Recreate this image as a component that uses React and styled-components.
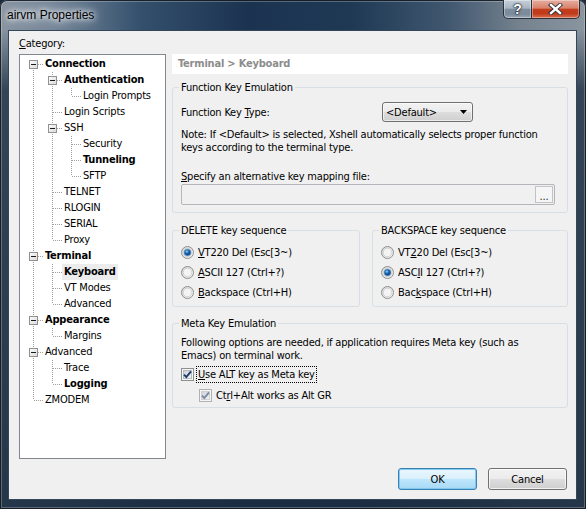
import React from 'react';
import styled, { createGlobalStyle } from 'styled-components';

const uiFont = `"DejaVu Sans Condensed", "DejaVu Sans", sans-serif`;

const GlobalStyle = createGlobalStyle`
  html, body {
    margin: 0;
    padding: 0;
    background: #1b2a3b;
  }
  body {
    width: 586px;
    height: 509px;
    overflow: hidden;
  }
`;

const tree = [
  {
    label: 'Connection',
    bold: true,
    children: [
      { label: 'Authentication', bold: true, children: [{ label: 'Login Prompts' }] },
      { label: 'Login Scripts' },
      {
        label: 'SSH',
        children: [{ label: 'Security' }, { label: 'Tunneling', bold: true }, { label: 'SFTP' }]
      },
      { label: 'TELNET' },
      { label: 'RLOGIN' },
      { label: 'SERIAL' },
      { label: 'Proxy' }
    ]
  },
  {
    label: 'Terminal',
    bold: true,
    children: [
      { label: 'Keyboard', bold: true, selected: true },
      { label: 'VT Modes' },
      { label: 'Advanced' }
    ]
  },
  { label: 'Appearance', bold: true, children: [{ label: 'Margins' }] },
  { label: 'Advanced', children: [{ label: 'Trace' }, { label: 'Logging', bold: true }] },
  { label: 'ZMODEM' }
];

function flatten(nodes, depth = 0, guides = [], out = []) {
  nodes.forEach((n, i) => {
    const last = i === nodes.length - 1;
    out.push({ ...n, depth, last, first: depth === 0 && i === 0, guides });
    if (n.children) flatten(n.children, depth + 1, [...guides, !last], out);
  });
  return out;
}

const rows = flatten(tree);

function Lines({ up, down, branch, box }) {
  return (
    <LineCell width="19" height="16" viewBox="0 0 19 16">
      <defs>
        <linearGradient id="expFill" x1="0" y1="0" x2="1" y2="1">
          <stop offset="0" stopColor="#ffffff" />
          <stop offset="1" stopColor="#d8d8d8" />
        </linearGradient>
      </defs>
      <g stroke="#a0a0a0" strokeWidth="1" strokeDasharray="1 1" shapeRendering="crispEdges">
        {up && <line x1="9.5" y1="0" x2="9.5" y2="8" />}
        {down && <line x1="9.5" y1="8" x2="9.5" y2="16" />}
        {branch && <line x1="10" y1="8.5" x2="19" y2="8.5" />}
      </g>
      {box && (
        <g shapeRendering="crispEdges">
          <rect x="5.5" y="4.5" width="8" height="8" fill="url(#expFill)" stroke="#919191" />
          <line x1="7" y1="8.5" x2="12" y2="8.5" stroke="#1a1a1a" />
        </g>
      )}
    </LineCell>
  );
}

function Radio({ checked }) {
  return (
    <Mark width="13" height="13" viewBox="0 0 13 13">
      <defs>
        <linearGradient id="radioBg" x1="0" y1="0" x2="1" y2="1">
          <stop offset="0" stopColor="#d4d4d4" />
          <stop offset="1" stopColor="#fbfbfb" />
        </linearGradient>
        <radialGradient id="radioDot" cx="0.4" cy="0.35" r="0.7">
          <stop offset="0" stopColor="#8fd0ff" />
          <stop offset="0.45" stopColor="#1a5fa6" />
          <stop offset="1" stopColor="#0b3f78" />
        </radialGradient>
      </defs>
      <circle cx="6.5" cy="6.5" r="6" fill="url(#radioBg)" stroke="#8e8f8f" />
      <circle cx="6.5" cy="6.5" r="4.3" fill="#f4f4f4" stroke="#c9c9c9" strokeWidth="0.8" />
      {checked && <circle cx="6.5" cy="6.5" r="3.3" fill="url(#radioDot)" stroke="#4a89c7" strokeWidth="0.7" />}
    </Mark>
  );
}

function Check({ dim }) {
  return (
    <Mark width="13" height="13" viewBox="0 0 13 13">
      <defs>
        <linearGradient id="checkBg" x1="0" y1="0" x2="1" y2="1">
          <stop offset="0" stopColor="#cbcfd5" />
          <stop offset="1" stopColor="#f7f7f7" />
        </linearGradient>
      </defs>
      <g shapeRendering="crispEdges">
        <rect x="0.5" y="0.5" width="12" height="12" fill="#f6f6f6" stroke={dim ? '#b1b1b1' : '#8e8f8f'} />
        <rect x="2.5" y="2.5" width="8" height="8" fill="url(#checkBg)" stroke={dim ? '#d0d0d0' : '#b8bcc2'} />
      </g>
      <path
        d="M3 6.6 L5.3 9 L10 3.4"
        fill="none"
        stroke={dim ? '#7b8ba6' : '#1f3d6a'}
        strokeWidth="1.9"
      />
    </Mark>
  );
}

function CloseGlyph() {
  return (
    <svg width="15" height="12" viewBox="0 0 15 12">
      <g strokeLinecap="square">
        <path d="M3 2 L12 10 M12 2 L3 10" stroke="#2a2f38" strokeWidth="4.2" />
        <path d="M3 2 L12 10 M12 2 L3 10" stroke="#ffffff" strokeWidth="2.4" />
      </g>
    </svg>
  );
}

function Arrow() {
  return (
    <svg width="7" height="4" viewBox="0 0 7 4">
      <polygon points="0,0 7,0 3.5,4" fill="#000" />
    </svg>
  );
}

export default function App() {
  return (
    <>
      <GlobalStyle />
      <Window>
        <TitleBar>
          <Caption>airvm Properties</Caption>
          <CaptionButtons>
            <CapButton>?</CapButton>
            <CapButton $close>
              <CloseGlyph />
            </CapButton>
          </CaptionButtons>
        </TitleBar>

        <Client>
          <CategoryLabel>
            <U>C</U>ategory:
          </CategoryLabel>

          <Main>
            <Tree>
              {rows.map((node, i) => (
                <TreeRow key={i}>
                  {node.guides.map((g, j) => (
                    <Lines key={j} up={g} down={g} />
                  ))}
                  <Lines up={!node.first} down={!node.last} branch box={!!node.children} />
                  <ItemLabel $bold={node.bold} $selected={node.selected}>
                    {node.label}
                  </ItemLabel>
                </TreeRow>
              ))}
            </Tree>

            <Panel>
              <PanelHeader>Terminal &gt; Keyboard</PanelHeader>

              <Group $top={7} $bottom={7}>
                <Legend>Function Key Emulation</Legend>
                <TypeRow>
                  <TypeLabel>
                    Function Key <U>T</U>ype:
                  </TypeLabel>
                  <Select>
                    <span>&lt;Default&gt;</span>
                    <Arrow />
                  </Select>
                </TypeRow>
                <Note $top={6}>
                  Note: If &lt;Default&gt; is selected, Xshell automatically selects proper function
                  <br />
                  keys according to the terminal type.
                </Note>
                <Note $top={16}>
                  <U>S</U>pecify an alternative key mapping file:
                </Note>
                <FileField>
                  <Browse>...</Browse>
                </FileField>
              </Group>

              <GroupRow>
                <Group $top={0} $bottom={4} $width={188}>
                  <Legend>DELETE key sequence</Legend>
                  <Options>
                    <OptionRow>
                      <Radio checked />
                      <span>
                        <U>V</U>T220 Del (Esc[3~)
                      </span>
                    </OptionRow>
                    <OptionRow>
                      <Radio />
                      <span>
                        <U>A</U>SCII 127 (Ctrl+?)
                      </span>
                    </OptionRow>
                    <OptionRow>
                      <Radio />
                      <span>
                        <U>B</U>ackspace (Ctrl+H)
                      </span>
                    </OptionRow>
                  </Options>
                </Group>
                <Group $top={0} $bottom={4} $width={196}>
                  <Legend>BACKSPACE key sequence</Legend>
                  <Options>
                    <OptionRow>
                      <Radio />
                      <span>
                        VT<U>2</U>20 Del (Esc[3~)
                      </span>
                    </OptionRow>
                    <OptionRow>
                      <Radio checked />
                      <span>
                        ASC<U>I</U>I 127 (Ctrl+?)
                      </span>
                    </OptionRow>
                    <OptionRow>
                      <Radio />
                      <span>
                        Bac<U>k</U>space (Ctrl+H)
                      </span>
                    </OptionRow>
                  </Options>
                </Group>
              </GroupRow>

              <Group $top={10} $bottom={3}>
                <Legend>Meta Key Emulation</Legend>
                <Note $top={6}>
                  Following options are needed, if application requires Meta key (such as
                  <br />
                  Emacs) on terminal work.
                </Note>
                <CheckRow>
                  <Check />
                  <CheckLabel $focus>
                    <U>U</U>se ALT key as Meta key
                  </CheckLabel>
                </CheckRow>
                <CheckRow $indent>
                  <Check dim />
                  <CheckLabel>
                    Ct<U>r</U>l+Alt works as Alt GR
                  </CheckLabel>
                </CheckRow>
              </Group>
            </Panel>
          </Main>

          <ButtonRow>
            <PushButton $default>OK</PushButton>
            <PushButton>Cancel</PushButton>
          </ButtonRow>
        </Client>
      </Window>
    </>
  );
}

const Window = styled.div`
  width: 586px;
  height: 509px;
  box-sizing: border-box;
  display: flex;
  flex-direction: column;
  border-radius: 7px 7px 0 0;
  overflow: hidden;
  background:
    linear-gradient(180deg, rgba(22, 40, 60, 0) 0px, rgba(22, 40, 60, 0) 30px, rgba(24, 42, 62, 0.75) 90px, rgba(26, 44, 64, 0.9) 100%),
    linear-gradient(90deg, #8894a0 0%, #76879a 9%, #34506d 24%, #1b3350 42%, #1f3955 60%, #3f566e 76%, #76838f 89%, #8a95a0 100%);
  box-shadow: inset 0 0 0 1px rgba(10, 16, 24, 0.85), inset 0 0 0 2px rgba(255, 255, 255, 0.25);
  font-family: ${uiFont};
  font-size: 11px;
  letter-spacing: -0.2px;
  color: #000;
`;

const TitleBar = styled.div`
  flex: none;
  height: 30px;
  display: flex;
  justify-content: space-between;
  align-items: flex-start;
`;

const Caption = styled.div`
  margin: 7px 0 0 7px;
  font-family: "Liberation Sans", Arial, sans-serif;
  font-size: 12px;
  line-height: 16px;
  letter-spacing: 0;
  color: #000;
  text-shadow: 0 0 5px #fff, 0 0 9px rgba(255, 255, 255, 0.95), 0 0 14px rgba(255, 255, 255, 0.8);
`;

const CaptionButtons = styled.div`
  display: flex;
  margin-right: 6px;
`;

const CapButton = styled.div`
  width: ${p => (p.$close ? 48 : 29)}px;
  height: 19px;
  box-sizing: border-box;
  display: flex;
  align-items: center;
  justify-content: center;
  border: 1px solid rgba(28, 36, 48, 0.9);
  border-top: none;
  border-radius: ${p => (p.$close ? '0 0 5px 0' : '0 0 0 5px')};
  border-left-width: ${p => (p.$close ? 0 : 1)}px;
  background: ${p =>
    p.$close
      ? 'linear-gradient(180deg, #e6ad9f 0%, #d9826b 45%, #c23e1d 52%, #c03a1b 75%, #d9714f 100%)'
      : 'linear-gradient(180deg, #c6d0da 0%, #a9b6c3 45%, #7e8e9f 52%, #7a8a9a 78%, #99a7b5 100%)'};
  box-shadow: inset 0 0 0 1px rgba(255, 255, 255, 0.35);
  color: #fff;
  font-family: "Liberation Sans", Arial, sans-serif;
  font-weight: bold;
  font-size: 14px;
  line-height: 14px;
  letter-spacing: 0;
  text-shadow: 0 0 1px #1c232d, 0 0 2px #1c232d, 0 0 2px #1c232d;
`;

const Client = styled.div`
  flex: 1;
  margin: 0 9px 9px 8px;
  box-sizing: border-box;
  border: 1px solid #34465a;
  background: #f0f0f0;
  padding: 6px 8px 0 10px;
  display: flex;
  flex-direction: column;
`;

const U = styled.span`
  text-decoration: underline;
`;

const CategoryLabel = styled.div`
  line-height: 13px;
  margin-bottom: 4px;
`;

const Main = styled.div`
  flex: none;
  height: 405px;
  display: flex;
  gap: 6px;
`;

const Tree = styled.div`
  width: 147px;
  flex: none;
  box-sizing: border-box;
  border: 1px solid #828790;
  background: #fff;
  padding: 1px 0 0 4px;
  overflow: hidden;
`;

const TreeRow = styled.div`
  display: flex;
  height: 16px;
  align-items: center;
`;

const LineCell = styled.svg`
  flex: none;
  display: block;
`;

const ItemLabel = styled.span`
  padding: 0 2px;
  line-height: 16px;
  white-space: nowrap;
  font-weight: ${p => (p.$bold ? 'bold' : 'normal')};
  background: ${p => (p.$selected ? '#ececec' : 'transparent')};
`;

const Panel = styled.div`
  flex: 1;
  display: flex;
  flex-direction: column;
`;

const PanelHeader = styled.div`
  height: 20px;
  line-height: 20px;
  padding-left: 6px;
  background: #fff;
  color: #8c8c8c;
  font-weight: bold;
`;

const Group = styled.fieldset`
  margin: ${p => p.$top}px 0 0 0;
  padding: 0 12px ${p => p.$bottom}px 8px;
  min-width: 0;
  width: ${p => (p.$width ? `${p.$width}px` : 'auto')};
  box-sizing: border-box;
  border: 1px solid #d5dfe5;
  border-radius: 3px;
`;

const Legend = styled.legend`
  padding: 0 2px;
  margin-left: -2px;
  line-height: 13px;
`;

const TypeRow = styled.div`
  display: flex;
  align-items: center;
  margin-top: 8px;
  height: 20px;
`;

const TypeLabel = styled.span`
  width: 201px;
  flex: none;
`;

const Select = styled.div`
  width: 91px;
  height: 20px;
  box-sizing: border-box;
  display: flex;
  align-items: center;
  justify-content: space-between;
  padding: 0 5px 0 3px;
  border: 1px solid #707070;
  border-radius: 3px;
  background: linear-gradient(180deg, #f2f2f2 0%, #ebebeb 50%, #dddddd 51%, #cfcfcf 100%);
  box-shadow: inset 0 0 0 1px rgba(255, 255, 255, 0.6);
`;

const Note = styled.div`
  margin-top: ${p => p.$top}px;
  line-height: 13px;
`;

const FileField = styled.div`
  margin-top: 1px;
  height: 21px;
  box-sizing: border-box;
  border: 1px solid #b3b6ba;
  border-radius: 2px;
  background: #f0f0f0;
  display: flex;
  justify-content: flex-end;
  padding: 1px;
`;

const Browse = styled.div`
  width: 18px;
  box-sizing: border-box;
  border: 1px solid #c3c3c3;
  background: #f5f5f5;
  text-align: center;
  line-height: 20px;
  font-size: 11px;
  color: #222;
`;

const GroupRow = styled.div`
  display: flex;
  gap: 12px;
  margin-top: 11px;
`;

const Options = styled.div`
  margin-top: 5px;
  display: flex;
  flex-direction: column;
`;

const OptionRow = styled.div`
  height: 20px;
  display: flex;
  align-items: center;
  gap: 4px;
  white-space: nowrap;
`;

const Mark = styled.svg`
  flex: none;
  display: block;
`;

const CheckRow = styled.div`
  height: 18px;
  margin-top: 3px;
  padding-left: ${p => (p.$indent ? 18 : 0)}px;
  display: flex;
  align-items: center;
  gap: 2px;
`;

const CheckLabel = styled.span`
  padding: 0 1px;
  line-height: 15px;
  border: 1px dotted ${p => (p.$focus ? '#000' : 'transparent')};
`;

const ButtonRow = styled.div`
  display: flex;
  justify-content: flex-end;
  gap: 11px;
  margin: 9px 1px 0 0;
`;

const PushButton = styled.div`
  width: 79px;
  height: 22px;
  box-sizing: border-box;
  display: flex;
  align-items: center;
  justify-content: center;
  border-radius: 3px;
  border: 1px solid ${p => (p.$default ? '#3c7fb1' : '#707070')};
  background: ${p =>
    p.$default
      ? 'linear-gradient(180deg, #eaf6fd 0%, #d9f0fc 50%, #bee6fd 51%, #a7d9f5 100%)'
      : 'linear-gradient(180deg, #f2f2f2 0%, #ebebeb 50%, #dddddd 51%, #cfcfcf 100%)'};
  box-shadow: inset 0 0 0 1px ${p => (p.$default ? 'rgba(120, 200, 240, 0.9)' : 'rgba(255, 255, 255, 0.7)')};
`;
